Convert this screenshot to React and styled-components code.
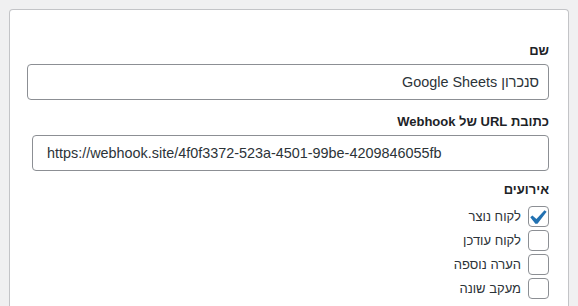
import React from "react";
import styled, { createGlobalStyle } from "styled-components";

const Global = createGlobalStyle`
  html, body { margin: 0; padding: 0; background: #f0f0f1; }
  body { font-family: "Liberation Sans", Arial, sans-serif; color: #1d2327; }
  * { box-sizing: border-box; }
`;

const Page = styled.div`
  padding: 9px 9px 0 9px;
  height: 306px;
  overflow: hidden;
`;

const Card = styled.div`
  direction: rtl;
  background: #fff;
  border: 1px solid #c3c4c7;
  border-bottom: none;
  border-radius: 4px 4px 0 0;
  padding: 32px 19px 40px 17px;
  min-height: 320px;
`;

const Field = styled.div`
  display: flex;
  flex-direction: column;
  margin-bottom: ${(p) => p.$gap || 0}px;
`;

const Label = styled.label`
  font-size: 13px;
  font-weight: 700;
  line-height: 18px;
  color: #1d2327;
  margin-bottom: 4px;
`;

const Input = styled.input`
  height: 36px;
  border: 1px solid #8c8f94;
  border-radius: 4px;
  font-family: "Liberation Sans", Arial, sans-serif;
  font-size: 14.4px;
  color: #2c3338;
  background: #fff;
  padding: 0 ${(p) => (p.$ltr ? 14 : 9)}px;
  direction: ${(p) => (p.$ltr ? "ltr" : "rtl")};
  margin-left: ${(p) => p.$indent || 0}px;
  outline: none;
`;

const CheckList = styled.div`
  display: flex;
  flex-direction: column;
  gap: 3px;
  margin-top: 3px;
`;

const CheckRow = styled.label`
  display: flex;
  align-items: center;
  gap: 7px;
  font-size: 13px;
  color: #2c3338;
  height: 21px;
`;

const Box = styled.span`
  width: 21px;
  height: 21px;
  border: 1px solid #8c8f94;
  border-radius: 4px;
  background: #fff;
  display: flex;
  align-items: center;
  justify-content: center;
  flex-shrink: 0;
  padding-top: 1px;
`;

const events = [
  { label: "לקוח נוצר", checked: true },
  { label: "לקוח עודכן", checked: false },
  { label: "הערה נוספה", checked: false },
  { label: "מעקב שונה", checked: false },
];

export default function App() {
  return (
    <>
      <Global />
      <Page>
        <Card>
          <Field $gap={13}>
            <Label>שם</Label>
            <Input defaultValue="סנכרון Google Sheets" />
          </Field>
          <Field $gap={10}>
            <Label>כתובת URL של Webhook</Label>
            <Input
              $ltr
              $indent={5}
              defaultValue="https://webhook.site/4f0f3372-523a-4501-99be-4209846055fb"
            />
          </Field>
          <Field>
            <Label>אירועים</Label>
            <CheckList>
              {events.map((e) => (
                <CheckRow key={e.label}>
                  <Box>
                    {e.checked && (
                      <svg
                        width="17"
                        height="14"
                        viewBox="5.6 4.7 10.8 9.6"
                        preserveAspectRatio="none"
                      >
                        <path
                          d="M14.83 4.89l1.34.94-5.81 8.38H9.02L5.78 9.67l1.34-1.25 2.57 2.4z"
                          fill="#2271b1"
                        />
                      </svg>
                    )}
                  </Box>
                  <span>{e.label}</span>
                </CheckRow>
              ))}
            </CheckList>
          </Field>
        </Card>
      </Page>
    </>
  );
}
